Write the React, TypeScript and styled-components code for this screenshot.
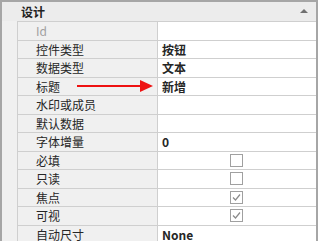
import React from "react";
import styled, { createGlobalStyle } from "styled-components";

const Global = createGlobalStyle`
  html, body { margin: 0; padding: 0; background: #f0f0f0; }
  body { font-family: "Noto Sans CJK SC", "Liberation Sans", sans-serif; }
`;

const Frame = styled.div`
  width: 318px;
  height: 241px;
  box-sizing: border-box;
  border-top: 2px solid #a6a6a6;
  border-left: 2px solid #a6a6a6;
  border-right: 2px solid #a6a6a6;
  background: #f0f0f0;
  overflow: hidden;
  display: flex;
  flex-direction: column;
`;

const Header = styled.div`
  height: 19px;
  flex: none;
  display: flex;
  align-items: center;
  justify-content: space-between;
  padding: 0 8px 0 19px;
  background: #ececec;
  font-size: 12px;
  font-weight: bold;
  color: #222;
`;

const Caret = styled.span`
  width: 0;
  height: 0;
  border-left: 4px solid transparent;
  border-right: 4px solid transparent;
  border-bottom: 4px solid #707070;
  margin-bottom: 2px;
`;

const Body = styled.div`
  flex: 1;
  display: flex;
  padding-left: 15px;
`;

const Table = styled.div`
  flex: 1;
  border-top: 1px solid #cfcfcf;
  border-left: 1px solid #cfcfcf;
`;

const Row = styled.div`
  display: grid;
  grid-template-columns: 139px 1px 1fr;
  height: 18.5px;
  box-sizing: border-box;
  border-bottom: 1px solid #cfcfcf;
  position: relative;
`;

const Label = styled.div<{ $muted?: boolean }>`
  background: #f0f0f0;
  padding-left: 18px;
  font-size: 12px;
  line-height: 17px;
  color: ${(p) => (p.$muted ? "#a0a0a0" : "#262626")};
  white-space: nowrap;
`;

const Divider = styled.div`
  background: #cfcfcf;
`;

const Value = styled.div<{ $center?: boolean }>`
  background: #ffffff;
  padding-left: 4px;
  font-size: 12px;
  font-weight: bold;
  line-height: 17px;
  color: #262626;
  display: flex;
  align-items: center;
  justify-content: ${(p) => (p.$center ? "center" : "flex-start")};
  white-space: nowrap;
`;

const Box = styled.span`
  width: 13px;
  height: 13px;
  box-sizing: border-box;
  border: 1px solid #a0a0a0;
  background: #fff;
  display: flex;
  align-items: center;
  justify-content: center;
  margin-left: -5px;
`;

const Arrow = styled.svg`
  position: absolute;
  left: 59px;
  top: 1px;
`;

type RowDef = { label: string; value?: string; check?: boolean; muted?: boolean; arrow?: boolean };

const rows: RowDef[] = [
  { label: "Id", muted: true },
  { label: "控件类型", value: "按钮" },
  { label: "数据类型", value: "文本" },
  { label: "标题", value: "新增", arrow: true },
  { label: "水印或成员" },
  { label: "默认数据" },
  { label: "字体增量", value: "0" },
  { label: "必填", check: false },
  { label: "只读", check: false },
  { label: "焦点", check: true },
  { label: "可视", check: true },
  { label: "自动尺寸", value: "None" },
];

const Check = () => (
  <svg width="9" height="9" viewBox="0 0 9 9">
    <path d="M1 4.5 L3.5 7 L8 1.5" fill="none" stroke="#8a8a8a" strokeWidth="1.2" />
  </svg>
);

export default function App() {
  return (
    <>
      <Global />
      <Frame>
        <Header>
          <span>设计</span>
          <Caret />
        </Header>
        <Body>
          <Table>
            {rows.map((r) => (
              <Row key={r.label}>
                <Label $muted={r.muted}>{r.label}</Label>
                <Divider />
                {r.check !== undefined ? (
                  <Value $center>
                    <Box>{r.check && <Check />}</Box>
                  </Value>
                ) : (
                  <Value>{r.value ?? ""}</Value>
                )}
                {r.arrow && (
                  <Arrow width="78" height="14" viewBox="0 0 78 14">
                    <line x1="0" y1="7" x2="66" y2="7" stroke="#ee1111" strokeWidth="2" />
                    <polygon points="63,1 76,7 63,13" fill="#ee1111" />
                  </Arrow>
                )}
              </Row>
            ))}
          </Table>
        </Body>
      </Frame>
    </>
  );
}
